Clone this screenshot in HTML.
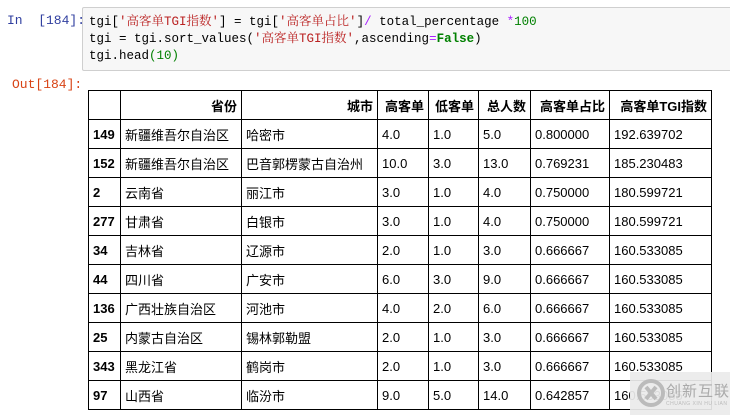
<!DOCTYPE html>
<html><head><meta charset="utf-8"><style>
body{margin:0;width:730px;height:415px;background:#fff;position:relative;overflow:hidden;font-family:"Liberation Sans","Noto Sans CJK SC",sans-serif}
.p{position:absolute;font-family:"Liberation Mono","Noto Sans CJK SC",monospace;font-size:13px;line-height:16px}
.code{position:absolute;left:82px;top:7px;width:660px;height:62px;background:#f7f7f7;border:1px solid #cfcfcf;border-radius:2px}
.code div{position:absolute;left:6px;height:17px;line-height:17px;font-family:"Liberation Mono","Noto Serif CJK SC",monospace;font-size:12.5px;color:#000;white-space:pre}
.s{color:#ba2121}.g{color:#008000}.k{color:#008000;font-weight:bold}.o{color:#aa22ff}
table{position:absolute;left:88px;top:90px;border-collapse:collapse;font-size:13px;color:#000}
td,th{border:1px solid #000;height:28px;padding:0 4px;white-space:nowrap}
th{text-align:right;font-weight:bold}
td{text-align:left}
td:first-child{font-weight:bold}
</style></head><body>
<div class="p" style="left:7px;top:13px;color:#303f9f">In&nbsp;&nbsp;[184]:</div>
<div class="code">
<div style="top:6px">tgi[<span class="s">'高客单TGI指数'</span>] = tgi[<span class="s">'高客单占比'</span>]<span class="o">/</span> total_percentage <span class="o">*</span><span class="g">100</span></div>
<div style="top:23px">tgi = tgi.sort_values(<span class="s">'高客单TGI指数'</span>,ascending<span class="o">=</span><span class="k">False</span>)</div>
<div style="top:40px">tgi.head<span class="g">(10)</span></div>
</div>
<div class="p" style="left:12px;top:77px;color:#d84315">Out[184]:</div>
<table>
<tr><th style="width:23px"></th><th style="width:112px">省份</th><th style="width:127px">城市</th><th style="width:42px">高客单</th><th style="width:41px">低客单</th><th style="width:43px">总人数</th><th style="width:70px">高客单占比</th><th style="width:93px">高客单TGI指数</th></tr>
<tr><td>149</td><td>新疆维吾尔自治区</td><td>哈密市</td><td>4.0</td><td>1.0</td><td>5.0</td><td>0.800000</td><td>192.639702</td></tr>
<tr><td>152</td><td>新疆维吾尔自治区</td><td>巴音郭楞蒙古自治州</td><td>10.0</td><td>3.0</td><td>13.0</td><td>0.769231</td><td>185.230483</td></tr>
<tr><td>2</td><td>云南省</td><td>丽江市</td><td>3.0</td><td>1.0</td><td>4.0</td><td>0.750000</td><td>180.599721</td></tr>
<tr><td>277</td><td>甘肃省</td><td>白银市</td><td>3.0</td><td>1.0</td><td>4.0</td><td>0.750000</td><td>180.599721</td></tr>
<tr><td>34</td><td>吉林省</td><td>辽源市</td><td>2.0</td><td>1.0</td><td>3.0</td><td>0.666667</td><td>160.533085</td></tr>
<tr><td>44</td><td>四川省</td><td>广安市</td><td>6.0</td><td>3.0</td><td>9.0</td><td>0.666667</td><td>160.533085</td></tr>
<tr><td>136</td><td>广西壮族自治区</td><td>河池市</td><td>4.0</td><td>2.0</td><td>6.0</td><td>0.666667</td><td>160.533085</td></tr>
<tr><td>25</td><td>内蒙古自治区</td><td>锡林郭勒盟</td><td>2.0</td><td>1.0</td><td>3.0</td><td>0.666667</td><td>160.533085</td></tr>
<tr><td>343</td><td>黑龙江省</td><td>鹤岗市</td><td>2.0</td><td>1.0</td><td>3.0</td><td>0.666667</td><td>160.533085</td></tr>
<tr><td>97</td><td>山西省</td><td>临汾市</td><td>9.0</td><td>5.0</td><td>14.0</td><td>0.642857</td><td>160.533085</td></tr>
</table>
<div style="position:absolute;left:630px;top:372px;width:100px;height:43px;background:rgba(235,235,235,0.93)">
<svg style="position:absolute;left:6px;top:6px" width="30" height="30" viewBox="0 0 30 30"><circle cx="15" cy="15" r="12" fill="none" stroke="#bbb" stroke-width="4"/><path d="M10 9 L20 21 M20 9 L10 21" stroke="#bbb" stroke-width="4"/></svg>
<div style="position:absolute;left:36px;top:8px;font-size:15px;color:#aaa;letter-spacing:1px">创新互联</div>
<div style="position:absolute;left:36px;top:29px;font-size:5px;color:#bbb;letter-spacing:0.5px">CHUANG XIN HU LIAN</div>
</div>
</body></html>
